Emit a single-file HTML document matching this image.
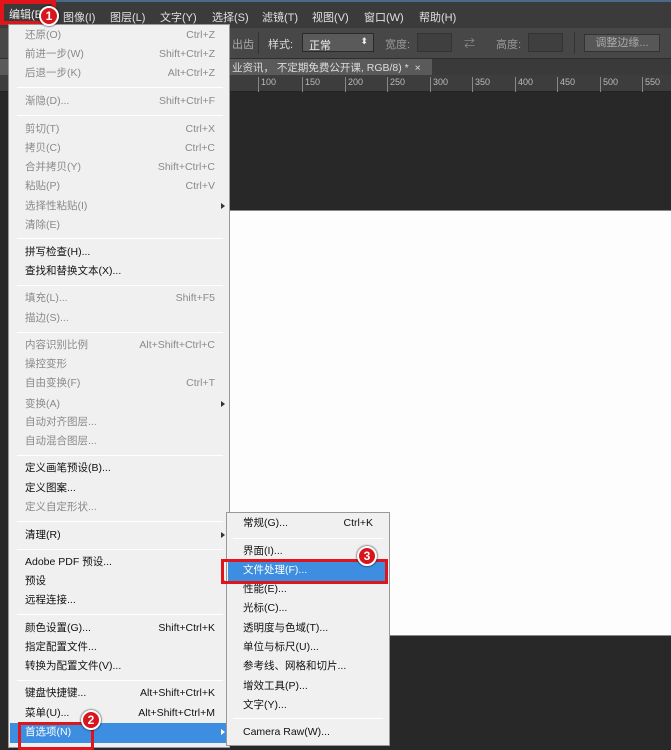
<!DOCTYPE html>
<html><head><meta charset="utf-8"><style>
*{margin:0;padding:0;box-sizing:border-box}
body{width:671px;height:748px;overflow:hidden;background:#282828;position:relative;font-family:"Liberation Sans","Noto Sans CJK SC",sans-serif;font-size:11px}
.a{position:absolute;white-space:nowrap}
.mb{left:0;top:0;width:671px;height:28px;background:#3b3b3b;border-top:2px solid #4a6a8a}
.mb span{position:absolute;top:7px;color:#e0e0e0;font-size:11px}
.tb{left:0;top:28px;width:671px;height:31px;background:#474747;border-bottom:1px solid #2e2e2e}
.tab{left:0;top:59px;width:671px;height:16px;background:#3a3a3a}
.ruler{left:0;top:75px;width:671px;height:17px;background:#3d3d3d;border-bottom:1px solid #222}
.ruler span{position:absolute;top:2px;color:#bbb;font-size:9px;padding-left:2px;border-left:1px solid #888;height:15px}
.menu{left:8px;top:24px;width:222px;height:724px;background:#f0f0f0;border:1px solid #999}
.it{position:absolute;left:16px;width:190px;height:19px;line-height:19px;color:#111;font-size:10.5px}
.it.d{color:#8a8a8a}
.it b{position:absolute;right:0;font-weight:normal}
.sep{position:absolute;left:8px;width:206px;height:1px;background:#bcbcbc;border-bottom:1px solid #fff}
.arr{position:absolute;right:-10px;top:6px;width:0;height:0;border-left:4px solid #333;border-top:3px solid transparent;border-bottom:3px solid transparent}
.sub{left:226px;top:512px;width:164px;height:234px;background:#f0f0f0;border:1px solid #999}
.sub .it{width:130px}
.circ{position:absolute;width:20px;height:20px;border-radius:50%;background:#d8151c;border:2px solid #fff;color:#fff;font-weight:bold;font-size:12px;text-align:center;line-height:16px;box-shadow:0 0 2px #000}
.rb{position:absolute;border:3px solid #e0141b}
</style></head><body>
<div class="a mb">
<span style="left:13px">编辑(E)</span><span style="left:63px">图像(I)</span><span style="left:110px">图层(L)</span><span style="left:160px">文字(Y)</span><span style="left:212px">选择(S)</span><span style="left:262px">滤镜(T)</span><span style="left:312px">视图(V)</span><span style="left:364px">窗口(W)</span><span style="left:419px">帮助(H)</span>
</div>
<div class="a" style="left:0;top:0;width:56px;height:25px;border:4px solid #e0141b;background:#3a3a3a"></div>
<div class="a" style="left:9px;top:6px;color:#eee">编辑(E</div>
<div class="a tb">
<span class="a" style="left:232px;top:8px;color:#aaa">出齿</span>
<div class="a" style="left:258px;top:4px;width:1px;height:22px;background:#333"></div>
<span class="a" style="left:268px;top:8px;color:#ddd">样式:</span>
<div class="a" style="left:302px;top:5px;width:72px;height:19px;background:#5a5a5a;border:1px solid #2a2a2a;color:#eee;padding:3px 6px">正常<span style="position:absolute;right:5px;top:2px;font-size:9px">⬍</span></div>
<span class="a" style="left:385px;top:8px;color:#999">宽度:</span>
<div class="a" style="left:417px;top:5px;width:35px;height:19px;background:#3f3f3f;border:1px solid #333"></div>
<span class="a" style="left:464px;top:7px;color:#888">⇄</span>
<span class="a" style="left:496px;top:8px;color:#999">高度:</span>
<div class="a" style="left:528px;top:5px;width:35px;height:19px;background:#3f3f3f;border:1px solid #333"></div>
<div class="a" style="left:574px;top:4px;width:1px;height:22px;background:#333"></div>
<div class="a" style="left:584px;top:6px;width:76px;height:18px;background:#575757;border:1px solid #333;color:#aaa;text-align:center;line-height:16px">调整边缘...</div>
</div>
<div class="a tab"><div class="a" style="left:0;top:0;width:432px;height:16px;background:#5a5a5a;color:#ddd;font-size:10.5px;padding:1px 0 0 232px">业资讯， 不定期免费公开课, RGB/8) * &nbsp;×</div></div>
<div class="a ruler">
<span style="left:258px">100</span><span style="left:302px">150</span><span style="left:345px">200</span><span style="left:387px">250</span><span style="left:430px">300</span><span style="left:472px">350</span><span style="left:515px">400</span><span style="left:557px">450</span><span style="left:600px">500</span><span style="left:642px">550</span>
</div>
<div class="a" style="left:230px;top:210px;width:441px;height:426px;background:#fdfdfd;border-top:1px solid #888;border-bottom:1px solid #888"></div>

<div class="a menu">
<div class="it d" style="top:1px">还原(O)<b>Ctrl+Z</b></div>
<div class="it d" style="top:20px">前进一步(W)<b>Shift+Ctrl+Z</b></div>
<div class="it d" style="top:39px">后退一步(K)<b>Alt+Ctrl+Z</b></div>
<div class="sep" style="top:62px"></div>
<div class="it d" style="top:67px">渐隐(D)...<b>Shift+Ctrl+F</b></div>
<div class="sep" style="top:90px"></div>
<div class="it d" style="top:95px">剪切(T)<b>Ctrl+X</b></div>
<div class="it d" style="top:114px">拷贝(C)<b>Ctrl+C</b></div>
<div class="it d" style="top:133px">合并拷贝(Y)<b>Shift+Ctrl+C</b></div>
<div class="it d" style="top:152px">粘贴(P)<b>Ctrl+V</b></div>
<div class="it d" style="top:172px">选择性粘贴(I)<span class="arr"></span></div>
<div class="it d" style="top:191px">清除(E)</div>
<div class="sep" style="top:213px"></div>
<div class="it" style="top:218px">拼写检查(H)...</div>
<div class="it" style="top:237px">查找和替换文本(X)...</div>
<div class="sep" style="top:260px"></div>
<div class="it d" style="top:264px">填充(L)...<b>Shift+F5</b></div>
<div class="it d" style="top:284px">描边(S)...</div>
<div class="sep" style="top:307px"></div>
<div class="it d" style="top:311px">内容识别比例<b>Alt+Shift+Ctrl+C</b></div>
<div class="it d" style="top:330px">操控变形</div>
<div class="it d" style="top:349px">自由变换(F)<b>Ctrl+T</b></div>
<div class="it d" style="top:370px">变换(A)<span class="arr"></span></div>
<div class="it d" style="top:388px">自动对齐图层...</div>
<div class="it d" style="top:407px">自动混合图层...</div>
<div class="sep" style="top:430px"></div>
<div class="it" style="top:434px">定义画笔预设(B)...</div>
<div class="it" style="top:454px">定义图案...</div>
<div class="it d" style="top:473px">定义自定形状...</div>
<div class="sep" style="top:496px"></div>
<div class="it" style="top:501px">清理(R)<span class="arr"></span></div>
<div class="sep" style="top:524px"></div>
<div class="it" style="top:528px">Adobe PDF 预设...</div>
<div class="it" style="top:547px">预设<span class="arr"></span></div>
<div class="it" style="top:566px">远程连接...</div>
<div class="sep" style="top:589px"></div>
<div class="it" style="top:594px">颜色设置(G)...<b>Shift+Ctrl+K</b></div>
<div class="it" style="top:613px">指定配置文件...</div>
<div class="it" style="top:632px">转换为配置文件(V)...</div>
<div class="sep" style="top:655px"></div>
<div class="it" style="top:659px">键盘快捷键...<b>Alt+Shift+Ctrl+K</b></div>
<div class="it" style="top:679px">菜单(U)...<b>Alt+Shift+Ctrl+M</b></div>
<div class="a" style="left:1px;top:698px;width:216px;height:20px;background:#3d8ee0"></div>
<div class="it" style="top:698px;color:#fff">首选项(N)<span class="arr" style="border-left-color:#fff"></span></div>
</div>

<div class="a sub">
<div class="it" style="top:1px">常规(G)...<b>Ctrl+K</b></div>
<div class="sep" style="top:25px;width:150px;left:6px"></div>
<div class="it" style="top:29px">界面(I)...</div>
<div class="a" style="left:1px;top:48px;width:160px;height:20px;background:#3d8ee0"></div>
<div class="it" style="top:48px;color:#fff">文件处理(F)...</div>
<div class="it" style="top:67px">性能(E)...</div>
<div class="it" style="top:86px">光标(C)...</div>
<div class="it" style="top:106px">透明度与色域(T)...</div>
<div class="it" style="top:125px">单位与标尺(U)...</div>
<div class="it" style="top:144px">参考线、网格和切片...</div>
<div class="it" style="top:164px">增效工具(P)...</div>
<div class="it" style="top:183px">文字(Y)...</div>
<div class="sep" style="top:205px;width:150px;left:6px"></div>
<div class="it" style="top:210px">Camera Raw(W)...</div>
</div>

<div class="rb" style="left:18px;top:722px;width:76px;height:28px"></div>
<div class="rb" style="left:221px;top:559px;width:167px;height:25px"></div>
<div class="circ" style="left:39px;top:6px">1</div>
<div class="circ" style="left:81px;top:710px">2</div>
<div class="circ" style="left:357px;top:546px">3</div>
</body></html>
